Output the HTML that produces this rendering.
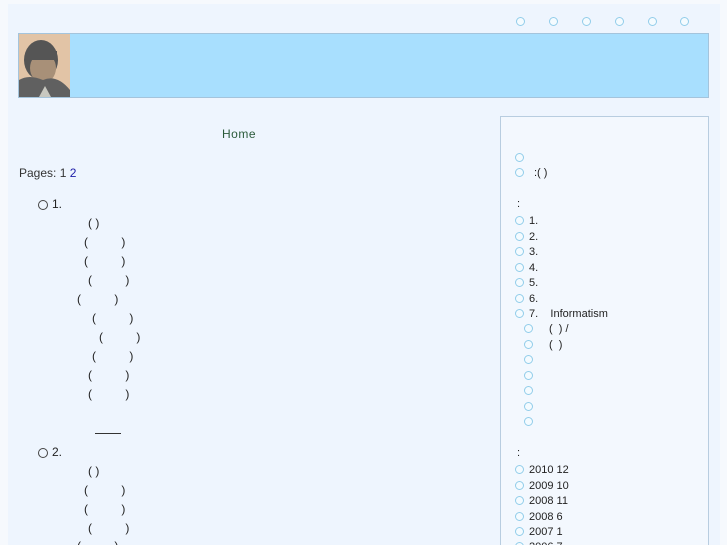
<!DOCTYPE html>
<html><head><meta charset="utf-8"><style>
html,body{margin:0;width:727px;height:545px;overflow:hidden}
body{background:#f6f9fd;font-family:"Liberation Sans","Noto Sans CJK SC",sans-serif;font-size:12px;color:#222;position:relative}
.a{position:absolute;white-space:pre;line-height:14px}
.c{position:absolute;width:7px;height:7px;border:1.5px solid #92cdea;border-radius:50%;background:#f4fbff}
.o{position:absolute;width:8px;height:8px;border:1px solid #444;border-radius:50%}
</style></head><body>
<div style="position:absolute;left:8px;top:4px;width:712px;height:541px;background:#eef5fe"></div>
<div class="c" style="left:516px;top:17px"></div><div class="c" style="left:549px;top:17px"></div><div class="c" style="left:582px;top:17px"></div><div class="c" style="left:615px;top:17px"></div><div class="c" style="left:648px;top:17px"></div><div class="c" style="left:680px;top:17px"></div>
<div style="position:absolute;left:18px;top:33px;width:689px;height:63px;background:#a8dffe;border:1px solid #a4c4dc"></div>
<svg style="position:absolute;left:19px;top:34px" width="51" height="63"><rect width="51" height="63" fill="#e2c4a6"/><ellipse cx="22" cy="26" rx="17" ry="20" fill="#555"/><ellipse cx="24" cy="34" rx="13" ry="15" fill="#a89078"/><rect x="10" y="17" width="28" height="9" fill="#555"/><path d="M0 63 L0 46 Q10 40 24 46 Q38 40 51 56 L51 63Z" fill="#606060"/><path d="M20 63 L26 52 L32 63Z" fill="#c8c8c0"/></svg>
<div class="a" style="left:222px;top:127px;color:#2a5a3a;letter-spacing:0.5px">Home</div>
<div class="a" style="left:19px;top:166px;color:#333">Pages: 1 <span style="color:#1c1ca8">2</span></div>
<div class="o" style="left:38px;top:200px"></div><div class="a" style="left:52px;top:197px">1.</div>
<div class="a" style="left:88px;top:216px">( )</div>
<div class="a" style="left:84px;top:235px">(          )</div>
<div class="a" style="left:84px;top:254px">(          )</div>
<div class="a" style="left:88px;top:273px">(          )</div>
<div class="a" style="left:77px;top:292px">(          )</div>
<div class="a" style="left:92px;top:311px">(          )</div>
<div class="a" style="left:99px;top:330px">(          )</div>
<div class="a" style="left:92px;top:349px">(          )</div>
<div class="a" style="left:88px;top:368px">(          )</div>
<div class="a" style="left:88px;top:387px">(          )</div>
<div style="position:absolute;left:95px;top:433px;width:26px;height:1px;background:#333"></div>
<div class="o" style="left:38px;top:448px"></div><div class="a" style="left:52px;top:445px">2.</div>
<div class="a" style="left:88px;top:464px">( )</div>
<div class="a" style="left:84px;top:483px">(          )</div>
<div class="a" style="left:84px;top:502px">(          )</div>
<div class="a" style="left:88px;top:521px">(          )</div>
<div class="a" style="left:77px;top:539px">(          )</div>
<div style="position:absolute;left:500px;top:116px;width:207px;height:440px;background:#f3f8fe;border:1px solid #b8cde0"></div>
<div style="font-size:11px">
<div class="c" style="left:515px;top:153px"></div>
<div class="c" style="left:515px;top:168px"></div><div class="a" style="left:534px;top:166px">:( )</div>
<div class="a" style="left:517px;top:197px">:</div>
<div class="c" style="left:515px;top:216px"></div><div class="a" style="left:529px;top:214px">1.</div>
<div class="c" style="left:515px;top:232px"></div><div class="a" style="left:529px;top:230px">2.</div>
<div class="c" style="left:515px;top:247px"></div><div class="a" style="left:529px;top:245px">3.</div>
<div class="c" style="left:515px;top:263px"></div><div class="a" style="left:529px;top:261px">4.</div>
<div class="c" style="left:515px;top:278px"></div><div class="a" style="left:529px;top:276px">5.</div>
<div class="c" style="left:515px;top:294px"></div><div class="a" style="left:529px;top:292px">6.</div>
<div class="c" style="left:515px;top:309px"></div><div class="a" style="left:529px;top:307px">7.    Informatism</div>
<div class="c" style="left:524px;top:324px"></div><div class="a" style="left:549px;top:322px">(  ) /</div>
<div class="c" style="left:524px;top:340px"></div><div class="a" style="left:549px;top:338px">(  )</div>
<div class="c" style="left:524px;top:355px"></div>
<div class="c" style="left:524px;top:371px"></div>
<div class="c" style="left:524px;top:386px"></div>
<div class="c" style="left:524px;top:402px"></div>
<div class="c" style="left:524px;top:417px"></div>
<div class="a" style="left:517px;top:446px">:</div>
<div class="c" style="left:515px;top:465px"></div><div class="a" style="left:529px;top:463px">2010 12</div>
<div class="c" style="left:515px;top:481px"></div><div class="a" style="left:529px;top:479px">2009 10</div>
<div class="c" style="left:515px;top:496px"></div><div class="a" style="left:529px;top:494px">2008 11</div>
<div class="c" style="left:515px;top:512px"></div><div class="a" style="left:529px;top:510px">2008 6</div>
<div class="c" style="left:515px;top:527px"></div><div class="a" style="left:529px;top:525px">2007 1</div>
<div class="c" style="left:515px;top:542px"></div><div class="a" style="left:529px;top:540px">2006 7</div>
</div>
</body></html>
